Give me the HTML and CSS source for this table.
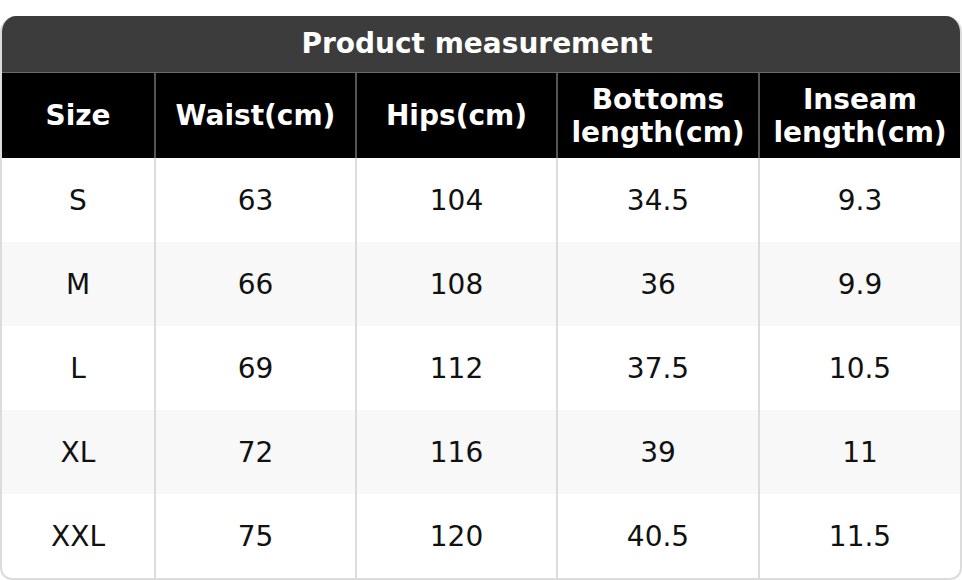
FILE: index.html
```html
<!DOCTYPE html>
<html>
<head>
<meta charset="utf-8">
<link rel="stylesheet" href="styles.css">
</head>
<body>
<div class="wrap">
  <div class="title">Product measurement</div>
  <table class="sizes">
    <colgroup>
      <col class="c1"><col class="c2"><col class="c3"><col class="c4"><col class="c5">
    </colgroup>
    <thead>
      <tr><th>Size</th><th>Waist(cm)</th><th>Hips(cm)</th><th>Bottoms<br>length(cm)</th><th>Inseam<br>length(cm)</th></tr>
    </thead>
    <tbody>
      <tr><td>S</td><td>63</td><td>104</td><td>34.5</td><td>9.3</td></tr>
      <tr><td>M</td><td>66</td><td>108</td><td>36</td><td>9.9</td></tr>
      <tr><td>L</td><td>69</td><td>112</td><td>37.5</td><td>10.5</td></tr>
      <tr><td>XL</td><td>72</td><td>116</td><td>39</td><td>11</td></tr>
      <tr><td>XXL</td><td>75</td><td>120</td><td>40.5</td><td>11.5</td></tr>
    </tbody>
  </table>
</div>
</body>
</html>
```
FILE: styles.css
```css
html, body { margin: 0; padding: 0; background: #fff; }
body { padding-top: 16px; font-family: "DejaVu Sans", sans-serif; }
.wrap {
  width: 962px;
  box-sizing: border-box;
  border: 2px solid #dcdcdc;
  border-top: none;
  border-radius: 16px 16px 12px 12px;
  overflow: hidden;
}
.title {
  background: #3c3c3c;
  color: #fff;
  font-weight: bold;
  font-size: 28px;
  height: 56px;
  line-height: 56px;
  text-align: center;
  border-bottom: 1px solid #6a6a6a;
  margin: 0 -2px;
  padding-right: 8px;
}
.sizes {
  width: 100%;
  border-collapse: collapse;
  table-layout: fixed;
}
.c1 { width: 153px; }
.c2 { width: 201px; }
.c3 { width: 201px; }
.c4 { width: 202px; }
.sizes th {
  background: #000;
  color: #fff;
  font-weight: bold;
  font-size: 28px;
  line-height: 33px;
  height: 85px;
  padding: 0;
  border-left: 2px solid #555;
}
.sizes td {
  font-size: 28px;
  color: #111;
  height: 84px;
  padding: 0;
  text-align: center;
  border-left: 2px solid #dcdcdc;
}
.sizes th:first-child, .sizes td:first-child { border-left: none; }
.sizes tbody tr:nth-child(even) td { background: #f8f8f8; }
```
